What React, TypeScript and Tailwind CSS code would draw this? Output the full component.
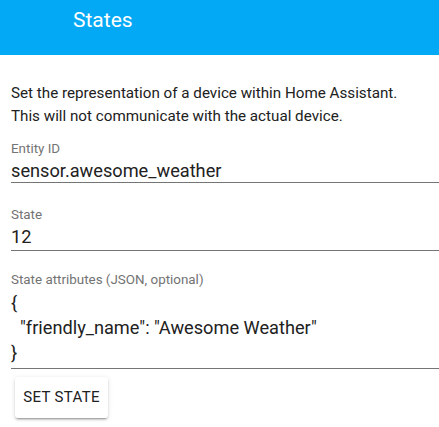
import React from "react";

function Field({
  label,
  children,
  className = "",
}: {
  label: string;
  children: React.ReactNode;
  className?: string;
}) {
  return (
    <div className={className}>
      <div className="text-[13.4px] leading-[16px] text-[#737373]">{label}</div>
      {children}
    </div>
  );
}

export default function App() {
  return (
    <div
      className="w-[439px] h-[427px] overflow-hidden bg-white text-[#212121]"
      style={{ fontFamily: "Roboto, 'Noto Sans', sans-serif" }}
    >
      <header className="h-[55px] bg-[#03a9f4] pl-[73px] pt-[6px]">
        <h1 className="text-[21px] leading-[28px] text-white font-normal">States</h1>
      </header>

      <main className="pl-[11px] pt-[27px]">
        <p className="text-[15.2px] leading-[23px] text-[#212121]">
          Set the representation of a device within Home Assistant.
          <br />
          This will not communicate with the actual device.
        </p>

        <Field label="Entity ID" className="mt-[13px]">
          <div className="mt-[2px] h-[24px] text-[18.2px] leading-[24px] border-b border-[#757575]">
            sensor.awesome_weather
          </div>
        </Field>

        <Field label="State" className="mt-[24px]">
          <div className="mt-[2px] h-[26px] text-[18.2px] leading-[24px] border-b border-[#757575]">
            12
          </div>
        </Field>

        <Field label="State attributes (JSON, optional)" className="mt-[21px]">
          <div className="pt-[2px] pb-[3px] text-[18.2px] leading-[25px] border-b border-[#757575] whitespace-pre">
            <div>{"{"}</div>
            <div>{'  "friendly_name": "Awesome Weather"'}</div>
            <div>{"}"}</div>
          </div>
        </Field>

        <button className="mt-[8px] ml-[4px] w-[93px] h-[41px] rounded-[3px] bg-white text-[15px] tracking-[0.35px] font-normal text-[#212121] shadow-[0_2px_2px_0_rgba(0,0,0,0.14),0_1px_5px_0_rgba(0,0,0,0.12),0_3px_1px_-2px_rgba(0,0,0,0.2)]">
          SET STATE
        </button>
      </main>
    </div>
  );
}
